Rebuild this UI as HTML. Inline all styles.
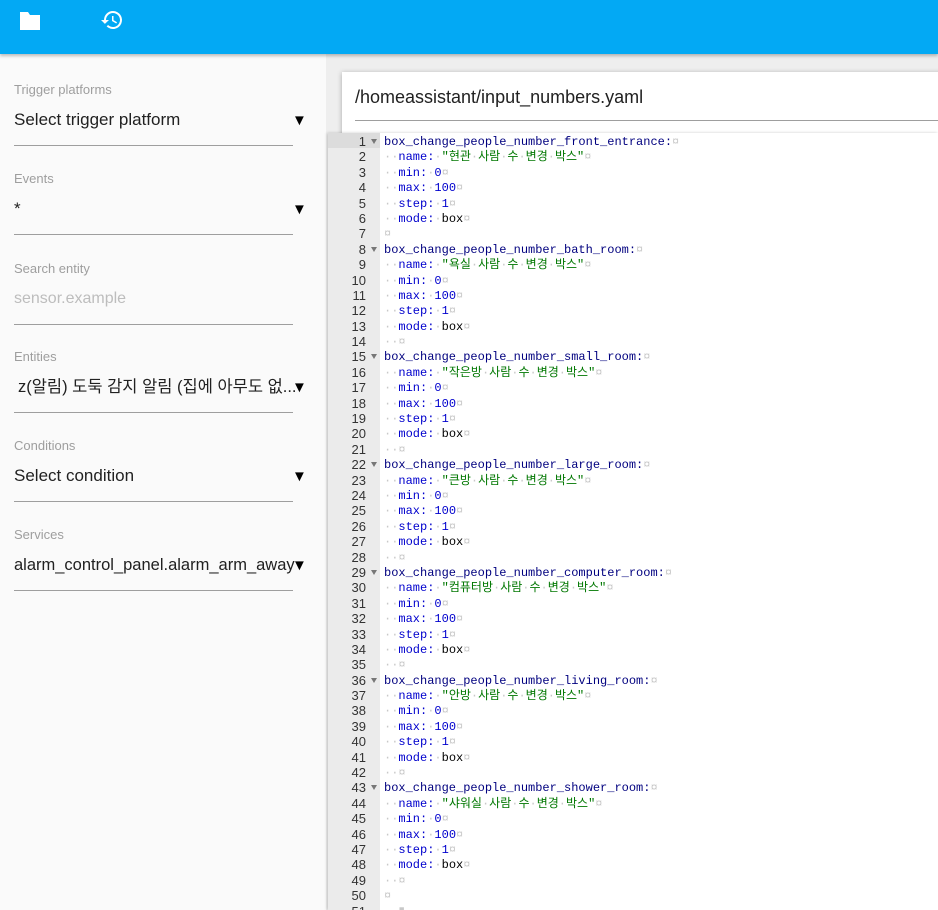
<!DOCTYPE html>
<html style="overflow:hidden;height:910px"><head><meta charset="utf-8"><style>
*{margin:0;padding:0;box-sizing:border-box}
body{width:938px;height:910px;overflow:hidden;background:#eeeeee;font-family:"Liberation Sans","Noto Sans CJK KR",sans-serif;position:relative}
.top{position:absolute;left:0;top:0;width:938px;height:54px;background:#03a9f4;box-shadow:0 2px 3px rgba(0,0,0,.25);z-index:3}
.left{position:absolute;left:0;top:54px;width:326px;height:856px;background:#fafafa}
.f{position:absolute;left:14px;width:279px;border-bottom:1px solid #9e9e9e;height:64px}
.f .l{position:absolute;top:0;font-size:13px;color:#9e9e9e}
.f .v{position:absolute;top:28px;font-size:17px;line-height:20px;color:#212121;white-space:nowrap}
.f .a{position:absolute;left:278px;top:30px;font-size:15px;line-height:17px;color:#000;font-family:"Liberation Sans",sans-serif}
.card{position:absolute;left:342px;top:72px;width:600px;height:838px;background:#fff;box-shadow:0 1px 5px rgba(0,0,0,.3)}
.title{position:absolute;left:13px;top:15px;font-size:18px;color:#212121}
.uline{position:absolute;left:13px;top:48px;width:600px;border-top:1px solid #9e9e9e}
.ed{position:absolute;left:328px;top:133px;width:610px;height:777px;background:#fff;font-family:"Liberation Mono","Noto Sans CJK KR",monospace;font-size:12px;box-shadow:-1px 0 3px rgba(0,0,0,.2);overflow:hidden}
.gut{position:absolute;left:0;top:0;width:52px;height:777px;background:#ebebeb;color:#333}
.ln{height:15.4px;line-height:15.4px;text-align:right;padding-right:14px;font-family:"Liberation Sans",sans-serif;font-size:13px;position:relative;padding-top:1px}
.ln.fold:after{content:"";position:absolute;right:3px;top:6px;border-left:3.5px solid transparent;border-right:3.5px solid transparent;border-top:5px solid #777}
.ln.act{background:#dcdcdc}
.code{position:absolute;left:56px;top:2px;color:#000}
.code div{height:15.4px;line-height:15.4px;white-space:pre;overflow:visible}
.k{color:#00007f}.b{color:#0000cd}.s{color:#007700}.d{color:#c8c8c8}
</style></head><body>
<div class="top">
<svg style="position:absolute;left:18px;top:11px" width="24" height="20" viewBox="0 0 24 20"><path d="M2 1h8l2 3h10v15H2z" fill="#fff"/></svg>
<svg style="position:absolute;left:99px;top:8px" width="26" height="24" viewBox="0 0 24 24"><path d="M13 3a9 9 0 0 0-9 9H1l3.9 3.9L9 12H6a7 7 0 1 1 2.05 4.95l-1.42 1.42A9 9 0 1 0 13 3zm-1 5v5l4.25 2.52.77-1.28-3.52-2.09V8z" fill="#fff"/></svg>
</div>
<div class="left">
<div class="f" style="top:28px"><span class="l">Trigger platforms</span><span class="v">Select trigger platform</span><span class="a">▼</span></div>
<div class="f" style="top:117px"><span class="l">Events</span><span class="v">*</span><span class="a">▼</span></div>
<div class="f" style="top:207px"><span class="l">Search entity</span><span class="v" style="color:#bdbdbd;font-size:16px">sensor.example</span></div>
<div class="f" style="top:295px"><span class="l">Entities</span><span class="v" style="left:4px;font-size:16.5px">z(알림) 도둑 감지 알림 (집에 아무도 없...</span><span class="a">▼</span></div>
<div class="f" style="top:384px"><span class="l">Conditions</span><span class="v">Select condition</span><span class="a">▼</span></div>
<div class="f" style="top:473px"><span class="l">Services</span><span class="v" style="font-size:16.5px">alarm_control_panel.alarm_arm_away</span><span class="a">▼</span></div>
</div>
<div class="card"><div class="title">/homeassistant/input_numbers.yaml</div><div class="uline"></div></div>
<div class="ed">
<div class="gut">
<div class="ln fold act">1</div><div class="ln">2</div><div class="ln">3</div><div class="ln">4</div><div class="ln">5</div><div class="ln">6</div><div class="ln">7</div>
<div class="ln fold">8</div><div class="ln">9</div><div class="ln">10</div><div class="ln">11</div><div class="ln">12</div><div class="ln">13</div><div class="ln">14</div>
<div class="ln fold">15</div><div class="ln">16</div><div class="ln">17</div><div class="ln">18</div><div class="ln">19</div><div class="ln">20</div><div class="ln">21</div>
<div class="ln fold">22</div><div class="ln">23</div><div class="ln">24</div><div class="ln">25</div><div class="ln">26</div><div class="ln">27</div><div class="ln">28</div>
<div class="ln fold">29</div><div class="ln">30</div><div class="ln">31</div><div class="ln">32</div><div class="ln">33</div><div class="ln">34</div><div class="ln">35</div>
<div class="ln fold">36</div><div class="ln">37</div><div class="ln">38</div><div class="ln">39</div><div class="ln">40</div><div class="ln">41</div><div class="ln">42</div>
<div class="ln fold">43</div><div class="ln">44</div><div class="ln">45</div><div class="ln">46</div><div class="ln">47</div><div class="ln">48</div><div class="ln">49</div>
<div class="ln">50</div><div class="ln">51</div>
</div>
<div class="code">
<div><span class="k">box_change_people_number_front_entrance:</span><span class="d">¤</span></div>
<div><span class="d">··</span><span class="b">name:</span><span class="d">·</span><span class="s">"현관<span class="d">·</span>사람<span class="d">·</span>수<span class="d">·</span>변경<span class="d">·</span>박스"</span><span class="d">¤</span></div>
<div><span class="d">··</span><span class="b">min:</span><span class="d">·</span><span class="b">0</span><span class="d">¤</span></div>
<div><span class="d">··</span><span class="b">max:</span><span class="d">·</span><span class="b">100</span><span class="d">¤</span></div>
<div><span class="d">··</span><span class="b">step:</span><span class="d">·</span><span class="b">1</span><span class="d">¤</span></div>
<div><span class="d">··</span><span class="b">mode:</span><span class="d">·</span>box<span class="d">¤</span></div>
<div><span class="d">¤</span></div>
<div><span class="k">box_change_people_number_bath_room:</span><span class="d">¤</span></div>
<div><span class="d">··</span><span class="b">name:</span><span class="d">·</span><span class="s">"욕실<span class="d">·</span>사람<span class="d">·</span>수<span class="d">·</span>변경<span class="d">·</span>박스"</span><span class="d">¤</span></div>
<div><span class="d">··</span><span class="b">min:</span><span class="d">·</span><span class="b">0</span><span class="d">¤</span></div>
<div><span class="d">··</span><span class="b">max:</span><span class="d">·</span><span class="b">100</span><span class="d">¤</span></div>
<div><span class="d">··</span><span class="b">step:</span><span class="d">·</span><span class="b">1</span><span class="d">¤</span></div>
<div><span class="d">··</span><span class="b">mode:</span><span class="d">·</span>box<span class="d">¤</span></div>
<div><span class="d">··¤</span></div>
<div><span class="k">box_change_people_number_small_room:</span><span class="d">¤</span></div>
<div><span class="d">··</span><span class="b">name:</span><span class="d">·</span><span class="s">"작은방<span class="d">·</span>사람<span class="d">·</span>수<span class="d">·</span>변경<span class="d">·</span>박스"</span><span class="d">¤</span></div>
<div><span class="d">··</span><span class="b">min:</span><span class="d">·</span><span class="b">0</span><span class="d">¤</span></div>
<div><span class="d">··</span><span class="b">max:</span><span class="d">·</span><span class="b">100</span><span class="d">¤</span></div>
<div><span class="d">··</span><span class="b">step:</span><span class="d">·</span><span class="b">1</span><span class="d">¤</span></div>
<div><span class="d">··</span><span class="b">mode:</span><span class="d">·</span>box<span class="d">¤</span></div>
<div><span class="d">··¤</span></div>
<div><span class="k">box_change_people_number_large_room:</span><span class="d">¤</span></div>
<div><span class="d">··</span><span class="b">name:</span><span class="d">·</span><span class="s">"큰방<span class="d">·</span>사람<span class="d">·</span>수<span class="d">·</span>변경<span class="d">·</span>박스"</span><span class="d">¤</span></div>
<div><span class="d">··</span><span class="b">min:</span><span class="d">·</span><span class="b">0</span><span class="d">¤</span></div>
<div><span class="d">··</span><span class="b">max:</span><span class="d">·</span><span class="b">100</span><span class="d">¤</span></div>
<div><span class="d">··</span><span class="b">step:</span><span class="d">·</span><span class="b">1</span><span class="d">¤</span></div>
<div><span class="d">··</span><span class="b">mode:</span><span class="d">·</span>box<span class="d">¤</span></div>
<div><span class="d">··¤</span></div>
<div><span class="k">box_change_people_number_computer_room:</span><span class="d">¤</span></div>
<div><span class="d">··</span><span class="b">name:</span><span class="d">·</span><span class="s">"컴퓨터방<span class="d">·</span>사람<span class="d">·</span>수<span class="d">·</span>변경<span class="d">·</span>박스"</span><span class="d">¤</span></div>
<div><span class="d">··</span><span class="b">min:</span><span class="d">·</span><span class="b">0</span><span class="d">¤</span></div>
<div><span class="d">··</span><span class="b">max:</span><span class="d">·</span><span class="b">100</span><span class="d">¤</span></div>
<div><span class="d">··</span><span class="b">step:</span><span class="d">·</span><span class="b">1</span><span class="d">¤</span></div>
<div><span class="d">··</span><span class="b">mode:</span><span class="d">·</span>box<span class="d">¤</span></div>
<div><span class="d">··¤</span></div>
<div><span class="k">box_change_people_number_living_room:</span><span class="d">¤</span></div>
<div><span class="d">··</span><span class="b">name:</span><span class="d">·</span><span class="s">"안방<span class="d">·</span>사람<span class="d">·</span>수<span class="d">·</span>변경<span class="d">·</span>박스"</span><span class="d">¤</span></div>
<div><span class="d">··</span><span class="b">min:</span><span class="d">·</span><span class="b">0</span><span class="d">¤</span></div>
<div><span class="d">··</span><span class="b">max:</span><span class="d">·</span><span class="b">100</span><span class="d">¤</span></div>
<div><span class="d">··</span><span class="b">step:</span><span class="d">·</span><span class="b">1</span><span class="d">¤</span></div>
<div><span class="d">··</span><span class="b">mode:</span><span class="d">·</span>box<span class="d">¤</span></div>
<div><span class="d">··¤</span></div>
<div><span class="k">box_change_people_number_shower_room:</span><span class="d">¤</span></div>
<div><span class="d">··</span><span class="b">name:</span><span class="d">·</span><span class="s">"샤워실<span class="d">·</span>사람<span class="d">·</span>수<span class="d">·</span>변경<span class="d">·</span>박스"</span><span class="d">¤</span></div>
<div><span class="d">··</span><span class="b">min:</span><span class="d">·</span><span class="b">0</span><span class="d">¤</span></div>
<div><span class="d">··</span><span class="b">max:</span><span class="d">·</span><span class="b">100</span><span class="d">¤</span></div>
<div><span class="d">··</span><span class="b">step:</span><span class="d">·</span><span class="b">1</span><span class="d">¤</span></div>
<div><span class="d">··</span><span class="b">mode:</span><span class="d">·</span>box<span class="d">¤</span></div>
<div><span class="d">··¤</span></div>
<div><span class="d">¤</span></div>
<div><span class="d">  ▮</span></div>
</div>
</div>
</body></html>
